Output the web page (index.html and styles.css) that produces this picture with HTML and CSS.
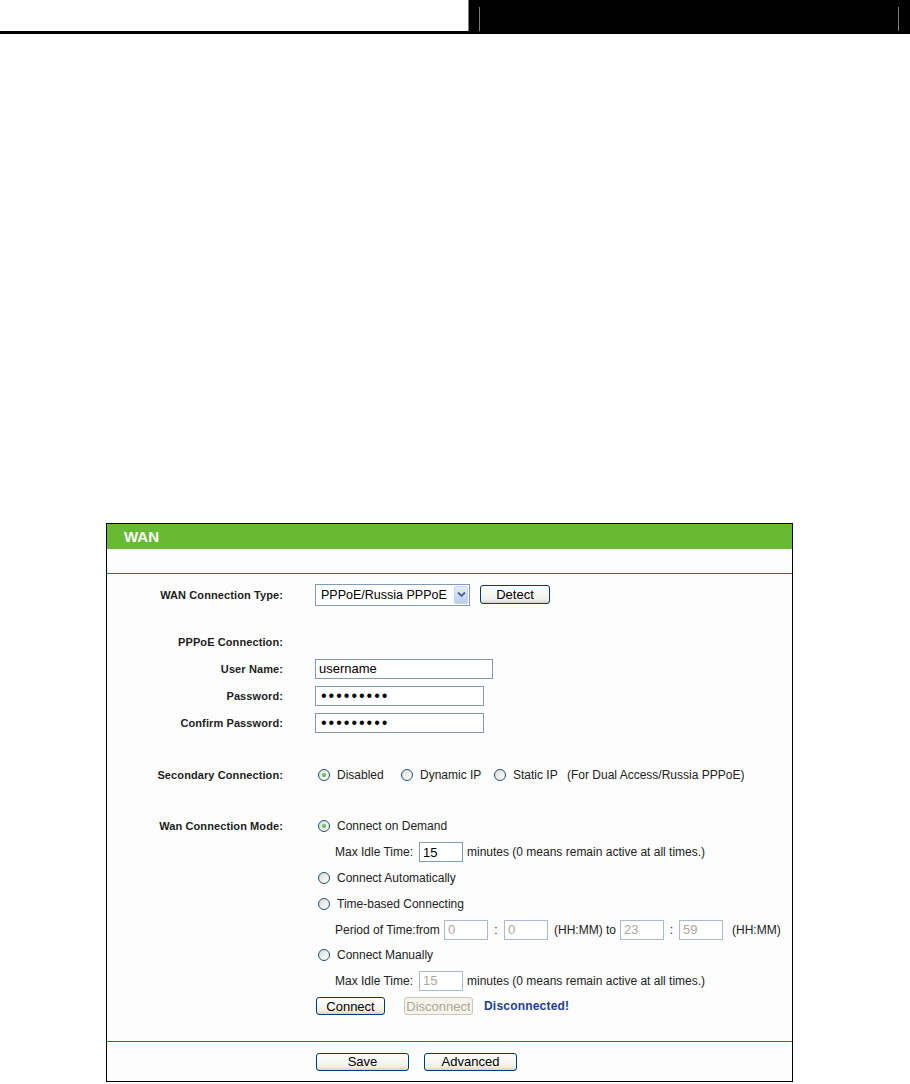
FILE: index.html
```html
<!DOCTYPE html>
<html lang="en">
<head>
    <meta charset="UTF-8">
    <title>WAN</title>
    <link rel="stylesheet" href="styles.css">
</head>
<body>
    <header class="page-head">
        <div class="head-left"></div>
        <div class="head-box">
            <div class="head-inner"></div>
        </div>
    </header>

    <div class="panel">
        <div class="panel-title">WAN</div>
        <div class="panel-gap"></div>

        <div class="panel-body">
            <div class="row">
                <div class="label">WAN Connection Type:</div>
                <div class="field">
                    <div class="select">
                        <span class="select-text">PPPoE/Russia PPPoE</span>
                        <span class="select-arrow">
                            <svg width="9" height="7" viewBox="0 0 9 7"><path d="M1 1.5 L4.5 5 L8 1.5" fill="none" stroke="#4d6185" stroke-width="1.8"/></svg>
                        </span>
                    </div>
                    <button class="btn btn-detect">Detect</button>
                </div>
            </div>

            <div class="row row-pppoe">
                <div class="label">PPPoE Connection:</div>
            </div>
            <div class="row">
                <div class="label">User Name:</div>
                <div class="field"><input class="input input-user" type="text" value="username"></div>
            </div>
            <div class="row">
                <div class="label">Password:</div>
                <div class="field"><input class="input input-pass" type="password" value="123456789"></div>
            </div>
            <div class="row">
                <div class="label">Confirm Password:</div>
                <div class="field"><input class="input input-pass" type="password" value="123456789"></div>
            </div>

            <div class="row row-secondary">
                <div class="label">Secondary Connection:</div>
                <div class="field">
                    <span class="option opt-disabled"><span class="radio checked"></span>Disabled</span>
                    <span class="option opt-dynamic"><span class="radio"></span>Dynamic IP</span>
                    <span class="option opt-static"><span class="radio"></span>Static IP</span>
                    <span>(For Dual Access/Russia PPPoE)</span>
                </div>
            </div>

            <div class="row row-mode">
                <div class="label">Wan Connection Mode:</div>
                <div class="field">
                    <span class="option"><span class="radio checked"></span>Connect on Demand</span>
                </div>
            </div>
            <div class="row">
                <div class="label"></div>
                <div class="field sub">
                    <span class="idle-label">Max Idle Time:</span>
                    <input class="input input-idle" type="text" value="15">
                    <span class="after-input">minutes (0 means remain active at all times.)</span>
                </div>
            </div>
            <div class="row">
                <div class="label"></div>
                <div class="field">
                    <span class="option"><span class="radio"></span>Connect Automatically</span>
                </div>
            </div>
            <div class="row">
                <div class="label"></div>
                <div class="field">
                    <span class="option"><span class="radio"></span>Time-based Connecting</span>
                </div>
            </div>
            <div class="row short">
                <div class="label"></div>
                <div class="field sub">
                    <span class="period-label">Period of Time:from</span>
                    <input class="input input-time" type="text" value="0" disabled>
                    <span class="colon">:</span>
                    <input class="input input-time" type="text" value="0" disabled>
                    <span class="hhmm-to">(HH:MM) to</span>
                    <input class="input input-time" type="text" value="23" disabled>
                    <span class="colon colon-2">:</span>
                    <input class="input input-time" type="text" value="59" disabled>
                    <span class="hhmm">(HH:MM)</span>
                </div>
            </div>
            <div class="row">
                <div class="label"></div>
                <div class="field">
                    <span class="option"><span class="radio"></span>Connect Manually</span>
                </div>
            </div>
            <div class="row short">
                <div class="label"></div>
                <div class="field sub">
                    <span class="idle-label">Max Idle Time:</span>
                    <input class="input input-idle" type="text" value="15" disabled>
                    <span class="after-input">minutes (0 means remain active at all times.)</span>
                </div>
            </div>
            <div class="row">
                <div class="label"></div>
                <div class="field">
                    <button class="btn btn-connect">Connect</button>
                    <button class="btn btn-disconnect" disabled>Disconnect</button>
                    <span class="status">Disconnected!</span>
                </div>
            </div>
        </div>

        <div class="panel-foot">
            <button class="btn btn-save">Save</button>
            <button class="btn btn-save">Advanced</button>
        </div>
    </div>
</body>
</html>
```

FILE: styles.css
```css
* {
    box-sizing: border-box;
    margin: 0;
    padding: 0;
}

body {
    font-family: 'Liberation Sans', Arial, sans-serif;
    font-size: 12px;
    color: #222;
    background-color: #fff;
}

/* Cabecera de la página */
.page-head {
    display: flex;
    height: 34px;
    border-bottom: 3px solid #000;
}

.head-left {
    width: 468px;
}

.head-box {
    flex: 1;
    background-color: #000;
    border-left: 1px solid #7a7a7a;
    padding: 7px 11px 0 10px;
}

.head-inner {
    height: 24px;
    border-left: 1px solid #7a7a7a;
    border-right: 1px solid #7a7a7a;
}

/* Panel WAN */
.panel {
    margin: 489px 0 0 106px;
    width: 687px;
    border: 1px solid #000;
    background-color: #fdfdfd;
}

.panel-title {
    height: 25px;
    line-height: 25px;
    background-color: #68ba34;
    color: #fff;
    font-size: 15px;
    font-weight: bold;
    padding-left: 17px;
}

.panel-gap {
    height: 25px;
    border-bottom: 1px solid #2f7a3f;
}

.panel-body {
    padding: 7px 0 22px;
    border-bottom: 1px solid #2f7a3f;
}

.row {
    display: flex;
    align-items: center;
    height: 27px;
}

.row-pppoe {
    margin-top: 20px;
}

.row-secondary {
    margin-top: 25px;
}

.row-mode {
    margin-top: 25px;
}

.row-mode,
.row-mode ~ .row {
    height: 26px;
}

.row-mode ~ .row.short {
    height: 25px;
}

.label {
    width: 176px;
    flex-shrink: 0;
    text-align: right;
    font-size: 11px;
    font-weight: bold;
    letter-spacing: 0.1px;
    color: #1e1e1e;
}

.field {
    margin-left: 32px;
    display: flex;
    align-items: center;
    white-space: nowrap;
}

.field > * {
    flex-shrink: 0;
}

.field.sub {
    padding-left: 20px;
}

/* Select */
.select {
    width: 155px;
    height: 22px;
    border: 1px solid #7f9db9;
    background-color: #fff;
    display: flex;
    align-items: center;
    justify-content: space-between;
    padding: 0 1px 0 5px;
    font-size: 12.5px;
    color: #000;
}

.select-arrow {
    width: 14px;
    height: 18px;
    border: 1px solid #c3d3fd;
    border-radius: 2px;
    background: linear-gradient(#e6eefc, #b9ccf7);
    display: flex;
    align-items: center;
    justify-content: center;
}

/* Botones */
.btn {
    height: 19px;
    border: 1px solid #003c74;
    border-radius: 3px;
    background: linear-gradient(#ffffff, #f0f0ea 80%, #d6d0c5);
    font-family: 'Liberation Sans', Arial, sans-serif;
    font-size: 13px;
    color: #000;
}

.btn:disabled {
    border-color: #c9c7ba;
    background: #f5f4ea;
    color: #aca899;
}

.btn-detect {
    width: 70px;
    margin-left: 10px;
}

.btn-connect {
    width: 69px;
    height: 18px;
    margin-left: 1px;
}

.btn-disconnect {
    width: 69px;
    height: 18px;
    margin-left: 19px;
}

.status {
    margin-left: 11px;
    font-weight: bold;
    letter-spacing: 0.2px;
    color: #1c3f94;
}

/* Campos de texto */
.input {
    height: 20px;
    border: 1px solid #7f9db9;
    background-color: #fff;
    padding: 0 3px;
    font-family: 'Liberation Sans', Arial, sans-serif;
    font-size: 13px;
    color: #000;
    outline: none;
}

.input:disabled {
    border-color: #a7bbd2;
    background-color: #fff;
    color: #aca899;
}

.input-user {
    width: 178px;
}

.input-pass {
    width: 169px;
    padding-left: 5px;
    font-size: 16px;
    letter-spacing: 2px;
}

.input-idle {
    width: 44px;
}

.input-time {
    width: 44px;
}

.after-input {
    margin-left: 4px;
}

.idle-label {
    width: 84px;
}

.period-label {
    width: 109px;
}

.colon {
    width: 16px;
    text-align: center;
}

.colon-2 {
    width: 15px;
}

.hhmm-to {
    width: 72px;
    padding-left: 6px;
}

.hhmm {
    margin-left: 9px;
}

/* Radios */
.option {
    display: inline-flex;
    align-items: center;
    padding-left: 3px;
}

.opt-disabled {
    width: 86px;
}

.opt-dynamic {
    width: 93px;
    padding-left: 0;
}

.opt-static {
    width: 73px;
    padding-left: 0;
}

.radio {
    position: relative;
    width: 12px;
    height: 12px;
    margin-right: 7px;
    border: 1px solid #1c5180;
    border-radius: 50%;
    background: linear-gradient(135deg, #dcdcd5, #ffffff);
}

.radio.checked::after {
    content: '';
    position: absolute;
    left: 3px;
    top: 3px;
    width: 4px;
    height: 4px;
    border-radius: 50%;
    background: radial-gradient(circle at 40% 40%, #7ed86f, #21a121);
}

/* Pie del panel */
.panel-foot {
    height: 39px;
    display: flex;
    align-items: center;
    gap: 15px;
    padding-left: 209px;
}

.btn-save {
    width: 93px;
    height: 18px;
}
```
